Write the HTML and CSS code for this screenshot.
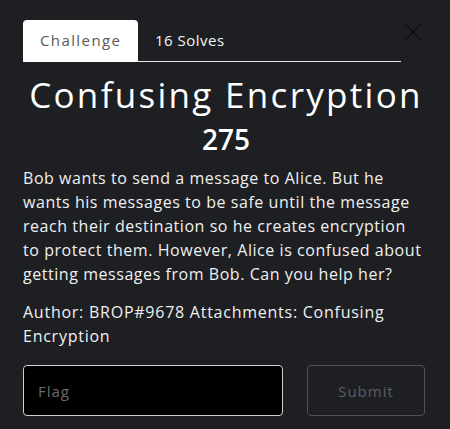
FILE: index.html
```html
<!DOCTYPE html>
<html>
<head>
<meta charset="utf-8">
<link rel="stylesheet" href="styles.css">
</head>
<body>
<div class="modal">
  <div class="top">
    <div class="tabs">
      <div class="tab active">Challenge</div>
      <div class="tab">16 Solves</div>
    </div>
    <button class="close" aria-label="Close">
      <svg width="18" height="18" viewBox="0 0 18 18"><path d="M1 1 L17 17 M17 1 L1 17" stroke="#101114" stroke-width="1.6" fill="none"/></svg>
    </button>
  </div>
  <h1 class="title">Confusing Encryption</h1>
  <div class="points">275</div>
  <p class="desc">Bob wants to send a message to Alice. But he<br>wants his messages to be safe until the message<br>reach their destination so he creates encryption<br>to protect them. However, Alice is confused about<br>getting messages from Bob. Can you help her?</p>
  <p class="meta">Author: BROP#9678 Attachments: Confusing Encryption</p>
  <form class="submit-row">
    <input class="flag" type="text" placeholder="Flag">
    <button class="submit" type="button">Submit</button>
  </form>
</div>
</body>
</html>
```
FILE: styles.css
```css
html, body {
  margin: 0;
  padding: 0;
  background: #1d1f23;
}
body {
  font-family: "Open Sans", "Noto Sans", sans-serif;
  color: #f2f2f2;
}
.modal {
  padding: 20px 21px 0 23px;
  display: flex;
  flex-direction: column;
}
.top {
  display: flex;
  align-items: flex-start;
}
.tabs {
  display: flex;
  width: 378px;
  border-bottom: 1px solid #e8e8e8;
  height: 41px;
}
.tab {
  font-size: 15px;
  letter-spacing: 0.5px;
  padding: 0 17px;
  line-height: 41px;
  height: 42px;
  color: #f4f4f4;
}
.tab.active {
  background: #ffffff;
  color: #5a5a5a;
  border-radius: 4px 4px 0 0;
  width: 81px;
  letter-spacing: 1.4px;
}
.close {
  background: none;
  border: 0;
  padding: 0;
  margin: 3px 0 0 3px;
  width: 18px;
  height: 18px;
}
.title {
  margin: 13px 0 0 0;
  text-align: center;
  font-size: 35px;
  font-weight: 400;
  letter-spacing: 2.3px;
  line-height: 40px;
  color: #ffffff;
}
.points {
  text-align: center;
  font-size: 28px;
  font-weight: 600;
  line-height: 32px;
  margin-top: 8px;
  color: #ffffff;
}
.desc, .meta {
  font-size: 16px;
  line-height: 24px;
  letter-spacing: 0.55px;
  margin: 11px 0 0 0;
  color: #f0f0f0;
  white-space: nowrap;
}
.meta {
  margin-top: 14px;
  letter-spacing: 0.75px;
  white-space: normal;
}
.submit-row {
  display: flex;
  gap: 24px;
  margin-top: 17px;
}
.flag {
  width: 260px;
  height: 51px;
  box-sizing: border-box;
  background: #000;
  border: 1px solid #cfcfcf;
  border-radius: 4px;
  padding: 0 14px;
  font-family: "Open Sans", sans-serif;
  font-size: 15px;
  letter-spacing: 1px;
  color: #eee;
}
.flag::placeholder {
  color: #6b6b6b;
}
.submit {
  width: 118px;
  height: 51px;
  box-sizing: border-box;
  background: transparent;
  border: 1px solid #505257;
  border-radius: 4px;
  font-family: "Open Sans", sans-serif;
  font-size: 15px;
  letter-spacing: 1px;
  color: #5c5e62;
}
```
